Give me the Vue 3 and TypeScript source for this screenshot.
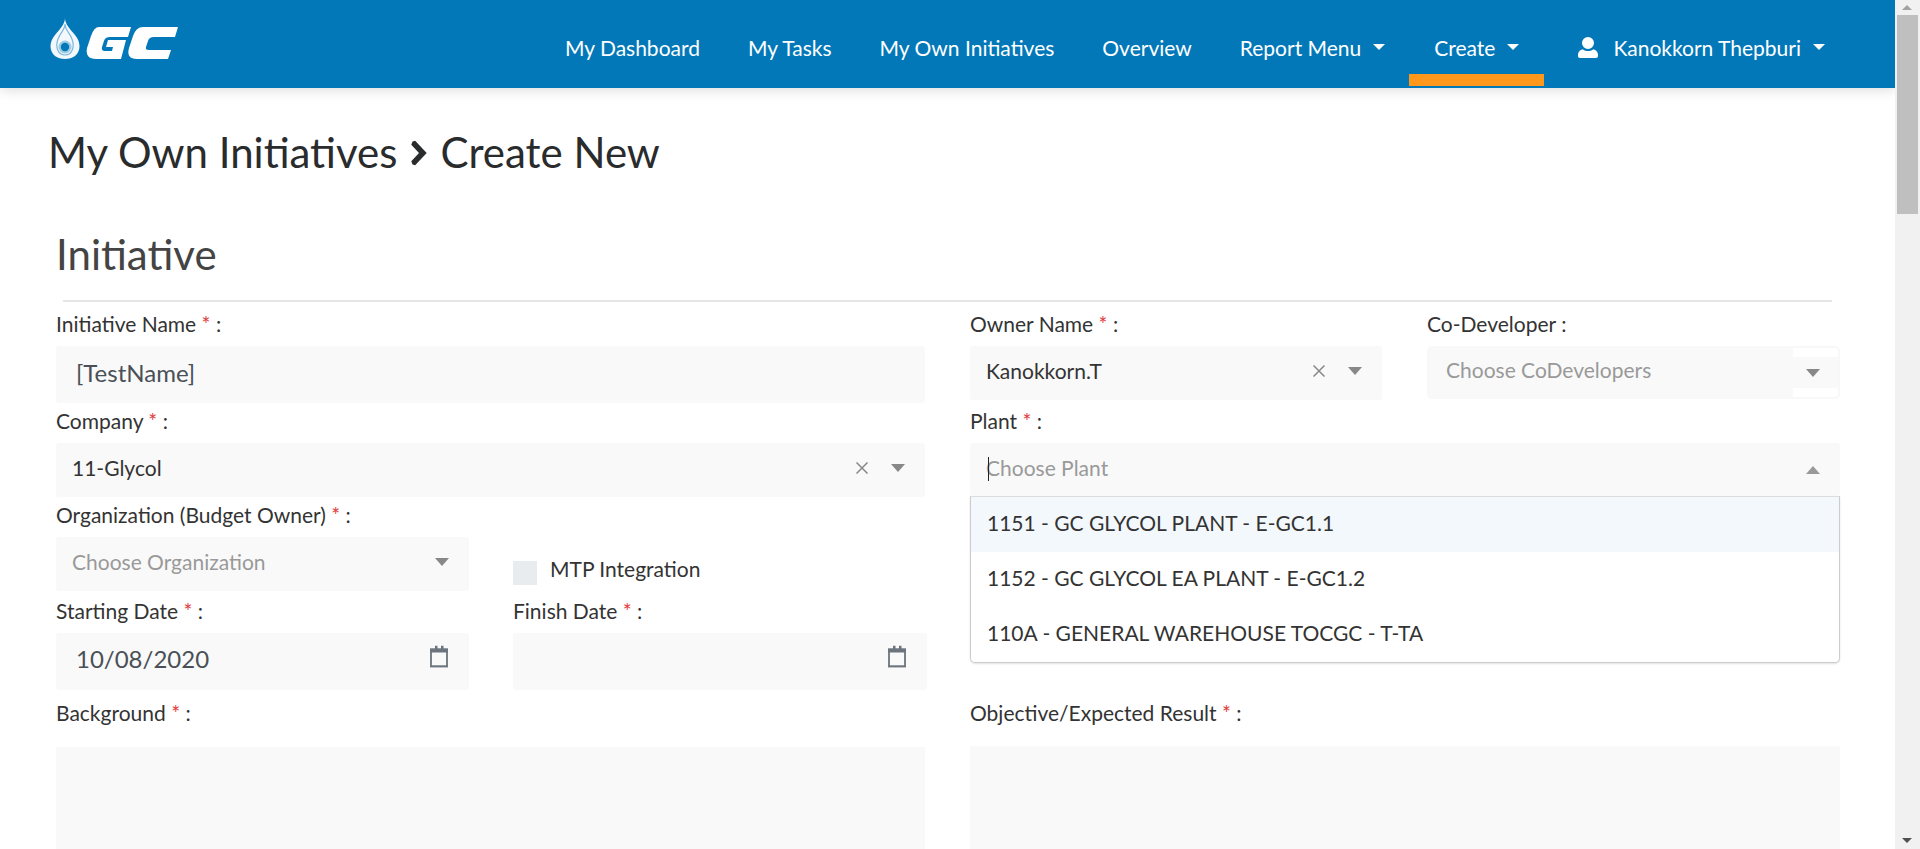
<script setup lang="ts">
const navItems = [
  { label: 'My Dashboard', caret: false },
  { label: 'My Tasks', caret: false },
  { label: 'My Own Initiatives', caret: false },
  { label: 'Overview', caret: false },
  { label: 'Report Menu', caret: true },
]
const plants = [
  '1151 - GC GLYCOL PLANT - E-GC1.1',
  '1152 - GC GLYCOL EA PLANT - E-GC1.2',
  '110A - GENERAL WAREHOUSE TOCGC - T-TA',
]
</script>

<template>
  <div class="page">
    <div class="scroller">
      <header class="topbar">
        <svg class="logo" viewBox="0 0 130 42" aria-label="GC logo">
          <path fill="#f2f8fc" d="M15 0C15 6 20 11 25 17C31 24 31 33 25 38C20 42 10 42 5 38C-1 33-1 24 5 17C10 11 15 6 15 0Z" />
          <path fill="none" stroke="#7db8da" stroke-width="1.2" d="M15 6C15 12 20 15 22 21C25 29 22 37 15 37S5 29 8 21C10 15 15 12 15 6Z" />
          <circle cx="15" cy="29" r="6.500" fill="#9ccbe4" />
          <circle cx="15" cy="29" r="4.200" fill="#0278b9" />
          <path fill="#fff" d="M49 9H81L78 19H60Q55 19 54 23L52 29Q51 33 55 33H62L63 29H56L58 22H76L71 41H46Q35 41 37 30L41 18Q44 9 49 9Z" />
          <path fill="#fff" d="M93 9H128L125 19H104Q99 19 98 23L96 29Q95 32 99 32H121L118 41H87Q76 41 79 30L83 18Q86 9 93 9Z" />
        </svg>
        <nav class="nav">
          <a v-for="item in navItems" :key="item.label" class="nav-link">
            {{ item.label }}<i v-if="item.caret" class="caret"></i>
          </a>
          <a class="nav-link active">Create<i class="caret"></i></a>
          <a class="nav-link user">
            <svg class="user-icon" viewBox="0 0 20 21"><path fill="#fff" d="M10 12a6 6 0 1 0 0-12 6 6 0 0 0 0 12zM5 12.500C2 12.500 0 15 0 18v1c0 1.200.8 2 2 2h16c1.200 0 2-.8 2-2v-1c0-3-2-5.500-5-5.500-1.500 1-3 1.500-5 1.500s-3.500-.5-5-1.500z" /></svg>
            Kanokkorn Thepburi<i class="caret"></i>
          </a>
        </nav>
      </header>

      <main class="content">
        <h1 class="crumb">
          My Own Initiatives
          <svg class="chevron" viewBox="0 0 14 20"><path fill="#292b2c" d="M2 1l2-.5 9 9.500-9 9.500-2-.5-1-2.500 6-6.500-6-6.500z" /></svg>
          Create New
        </h1>
        <h2 class="section">Initiative</h2>
        <hr class="rule" />

        <div class="form">
          <div class="col">
            <label class="lbl">Initiative Name <em>*</em> :</label>
            <div class="field tall text">[TestName]</div>

            <label class="lbl">Company <em>*</em> :</label>
            <div class="field sel">
              <span>11-Glycol</span>
              <svg class="clear" viewBox="0 0 12 12"><path d="M.5.5l11 11M11.500.5l-11 11" /></svg><i class="arrow"></i>
            </div>

            <div class="split">
              <div>
                <label class="lbl">Organization (Budget Owner) <em>*</em> :</label>
                <div class="field sel muted"><span>Choose Organization</span><i class="arrow"></i></div>
              </div>
              <label class="check"><span class="box"></span>MTP Integration</label>
            </div>

            <div class="split dates">
              <div>
                <label class="lbl">Starting Date <em>*</em> :</label>
                <div class="field tall text date">
                  10/08/2020
                  <svg class="cal" viewBox="0 0 18 22"><rect x="1" y="4" width="16" height="17" fill="none" stroke="#6c757d" stroke-width="1.800" /><path fill="#6c757d" d="M0 3h18v4H0zM5 0h2.500v4H5zM11 0h2.500v4H11zM0 20h18v2H0z" /></svg>
                </div>
              </div>
              <div>
                <label class="lbl">Finish Date <em>*</em> :</label>
                <div class="field tall text date">
                  <svg class="cal" viewBox="0 0 18 22"><rect x="1" y="4" width="16" height="17" fill="none" stroke="#6c757d" stroke-width="1.800" /><path fill="#6c757d" d="M0 3h18v4H0zM5 0h2.500v4H5zM11 0h2.500v4H11zM0 20h18v2H0z" /></svg>
                </div>
              </div>
            </div>

            <label class="lbl area-lbl">Background <em>*</em> :</label>
            <div class="area"></div>
          </div>

          <div class="col">
            <div class="split owner">
              <div>
                <label class="lbl">Owner Name <em>*</em> :</label>
                <div class="field sel">
                  <span>Kanokkorn.T</span>
                  <svg class="clear" viewBox="0 0 12 12"><path d="M.5.5l11 11M11.500.5l-11 11" /></svg><i class="arrow"></i>
                </div>
              </div>
              <div>
                <label class="lbl">Co-Developer :</label>
                <div class="codev">
                  <span>Choose CoDevelopers</span>
                  <i class="arrow"></i>
                </div>
              </div>
            </div>

            <label class="lbl plant-lbl">Plant <em>*</em> :</label>
            <div class="plant">
              <div class="field sel muted open">
                <span class="caret-line"></span>
                <span>Choose Plant</span>
                <i class="arrow up"></i>
              </div>
              <ul class="menu">
                <li v-for="(p, i) in plants" :key="p" :class="{ hover: i === 0 }">{{ p }}</li>
              </ul>
            </div>

            <label class="lbl area-lbl right">Objective/Expected Result <em>*</em> :</label>
            <div class="area"></div>
          </div>
        </div>
      </main>
    </div>

    <aside class="scrollbar">
      <i class="sb-up"></i>
      <div class="thumb"></div>
      <i class="sb-down"></i>
    </aside>
  </div>
</template>

<style>
html, body { margin: 0; height: 100%; overflow: hidden; }
</style>

<style scoped>
* { box-sizing: border-box; }
.page {
  display: flex;
  height: 849px;
  overflow: hidden;
  font-family: Lato, "Liberation Sans", sans-serif;
  font-variant-ligatures: common-ligatures;
  text-rendering: optimizeLegibility;
  color: #292b2c;
  background: #fff;
}
.scroller { flex: 1; min-width: 0; overflow: hidden; }
.topbar {
  height: 88px;
  background: #0278b9;
  display: flex;
  align-items: flex-start;
  justify-content: space-between;
  box-shadow: 0 2px 12px rgba(0, 0, 0, 0.14);
  position: relative;
}
.logo { width: 130px; height: 42px; margin: 18px 0 0 50px; }
.nav { display: flex; margin-right: 70px; }
.nav-link {
  display: flex;
  align-items: center;
  height: 75px;
  margin-top: 11px;
  padding: 0 24px 2px;
  color: #fff;
  font-size: 21px;
  white-space: nowrap;
  position: relative;
}
.nav-link.active { padding: 0 25px 2px; }
.nav-link.active::after {
  content: "";
  position: absolute;
  left: 0;
  right: 0;
  top: 63px;
  height: 12px;
  background: #ff981a;
}
.nav-link.user { padding-left: 34px; padding-right: 0; }
.user-icon { width: 20px; height: 21px; margin-right: 15px; }
.caret {
  display: inline-block;
  margin-left: 12px;
  border-left: 6px solid transparent;
  border-right: 6px solid transparent;
  border-top: 6.500px solid #fff;
  transform: translateY(-1px);
}

.content { padding: 0 55px 0 56px; }
.crumb {
  margin: 39px 0 0 -8px;
  font-size: 42px;
  font-weight: 400;
  line-height: 50px;
  color: #292b2c;
  display: flex;
  align-items: center;
  gap: 12.500px;
}
.chevron { width: 18px; height: 26px; margin-top: 1px; }
.section {
  margin: 51px 0 0;
  font-size: 42px;
  font-weight: 400;
  line-height: 52px;
  color: #444;
}
.rule {
  margin: 20px 8px 0 7px;
  border: 0;
  border-top: 2px solid #e6e6e6;
}
.form {
  display: grid;
  grid-template-columns: 869px 870px;
  column-gap: 45px;
  padding-top: 4px;
}
.lbl {
  display: block;
  font-size: 21px;
  line-height: 22px;
  margin: 7px 0 11px;
  color: #333;
}
.lbl em { color: #e23b3b; font-style: normal; }
.field {
  background: #f9f9f9;
  border-radius: 3px;
  height: 54px;
  position: relative;
}
.tall { height: 57px; }
.text {
  display: flex;
  align-items: center;
  padding: 0 20px 4px;
  font-size: 24px;
  color: #495057;
}
.sel {
  display: flex;
  align-items: center;
  padding: 0 20px 5px 16px;
  font-size: 21px;
  color: #333;
}
.sel > span:first-child { flex: 1; }
.muted { color: #999; }
.clear {
  width: 12px;
  height: 12px;
  margin-right: 23px;
  fill: none;
  stroke: #888;
  stroke-width: 1.500;
}
.arrow {
  display: inline-block;
  border-left: 7.500px solid transparent;
  border-right: 7.500px solid transparent;
  border-top: 8px solid #888;
}
.arrow.up { border-top: 0; border-bottom: 8px solid #999; }
.split {
  display: grid;
  grid-template-columns: 413px 414px;
  column-gap: 44px;
}
.check {
  display: flex;
  align-items: flex-start;
  gap: 13px;
  font-size: 21px;
  line-height: 24px;
  color: #333;
  padding-top: 60px;
}
.box { width: 24px; height: 24px; margin-top: 4px; background: #e9ecef; flex: none; }
.dates { margin-top: 2px; padding-bottom: 1px; }
.dates > div { min-width: 0; }
.date { justify-content: space-between; padding-bottom: 6px; }
.date .cal { margin-left: auto; margin-right: 1px; width: 18px; height: 22px; transform: translateY(-2.500px); }
.area-lbl { margin: 11px 0 23px; }
.area-lbl.right { margin-bottom: 22px; }
.area { height: 130px; background: #f9f9f9; }

.owner { grid-template-columns: 412px 413px; column-gap: 45px; }
.codev {
  height: 53px;
  border: 2px solid #f8f8f8;
  border-radius: 5px;
  display: flex;
  align-items: center;
  justify-content: space-between;
  padding: 0 18px 6px 17px;
  font-size: 21px;
  color: #999;
  background: linear-gradient(#f9f9f9, #f9f9f9) 0 0 / 364px 100% no-repeat,
    linear-gradient(#f9f9f9, #f9f9f9) 0 9px / 100% 31px no-repeat, #fff;
}
.codev .arrow { margin-top: 6px; }
.plant-lbl { margin-top: 10px; }
.plant { position: relative; min-height: 248px; }
.open { height: 53px; padding-bottom: 4px; }
.open .arrow { margin-top: 4px; }
.open .caret-line {
  position: absolute;
  left: 18px;
  top: 14px;
  width: 1px;
  height: 24px;
  background: #222;
  flex: none;
}
.open > span:nth-child(2) { flex: 1; }
.menu {
  list-style: none;
  margin: 0;
  padding: 0;
  background: #fff;
  border: 1px solid #ccc;
  border-top-color: #ddd;
  border-radius: 0 0 5px 5px;
  box-shadow: 0 1px 2px rgba(0, 0, 0, 0.12);
  position: absolute;
  left: 0;
  right: 0;
  top: 53px;
  z-index: 3;
}
.menu li {
  height: 55px;
  display: flex;
  align-items: center;
  padding: 0 16px 4px;
  font-size: 21px;
  color: #333;
}
.menu li.hover { background: #f3f8fd; }

.scrollbar {
  width: 25px;
  flex: none;
  background: #f1f1f1;
  position: relative;
}
.thumb {
  position: absolute;
  left: 2px;
  right: 2px;
  top: 15px;
  height: 199px;
  background: #bfbfbf;
}
.sb-up, .sb-down {
  position: absolute;
  left: 7px;
  border-left: 5.500px solid transparent;
  border-right: 5.500px solid transparent;
}
.sb-up { top: 5px; border-bottom: 5px solid #a3a3a3; }
.sb-down { bottom: 6px; border-top: 5px solid #505050; }
</style>
